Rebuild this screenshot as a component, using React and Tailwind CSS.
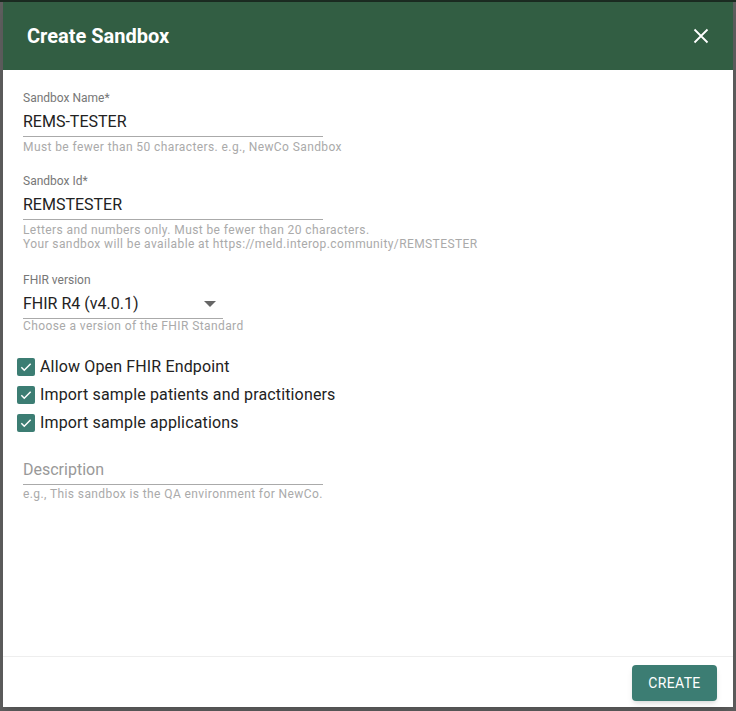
import React from 'react';

const font = { fontFamily: 'Roboto, "Liberation Sans", sans-serif' };

const Check = ({ label }) => (
  <label className="flex items-center h-7">
    <span className="ml-[14px] w-[18px] h-[18px] rounded-[2px] bg-[#3c7d73] flex items-center justify-center">
      <svg width="14" height="14" viewBox="0 0 24 24" fill="none">
        <path d="M4 12.5l5 5L20 6.5" stroke="white" strokeWidth="2.6" />
      </svg>
    </span>
    <span className="ml-[5px] text-[16px] text-[#222] tracking-[0.15px]">{label}</span>
  </label>
);

const Helper = ({ children, className = '' }) => (
  <div className={`text-[12px] text-[#aaa] leading-[14px] tracking-[0.4px] ${className}`}>{children}</div>
);

const Field = ({ label, value, helper }) => (
  <div className="px-[20px]">
    <div className="text-[12px] text-[#777] leading-[14px]">{label}</div>
    <div className="w-[300px] border-b border-[#aaa] h-[32px] flex items-end pb-[5px] text-[16px] text-[#222] leading-[19px]">
      {value}
    </div>
    <div className="mt-[3px]">
      {helper.map((h) => (
        <Helper key={h}>{h}</Helper>
      ))}
    </div>
  </div>
);

export default function App() {
  return (
    <div className="w-[736px] h-[711px] bg-[#5e5e5e] relative overflow-hidden" style={font}>
      <div className="h-[2px] bg-[#1b2b21]" />
      <div className="mx-[3px] h-[705px] bg-white flex flex-col shadow-lg">
        <div className="h-[68px] bg-[#325e43] flex items-center justify-between pl-[24px] pr-[24px]">
          <h1 className="text-white text-[20px] font-bold">Create Sandbox</h1>
          <svg width="16" height="16" viewBox="0 0 16 16">
            <path d="M1.5 1.5l13 13M14.5 1.5l-13 13" stroke="white" strokeWidth="1.8" />
          </svg>
        </div>
        <div className="flex-1 pt-[21px]">
          <Field label="Sandbox Name*" value="REMS-TESTER" helper={['Must be fewer than 50 characters. e.g., NewCo Sandbox']} />
          <div className="h-[20px]" />
          <Field
            label="Sandbox Id*"
            value="REMSTESTER"
            helper={[
              'Letters and numbers only. Must be fewer than 20 characters.',
              'Your sandbox will be available at https://meld.interop.community/REMSTESTER',
            ]}
          />
          <div className="h-[22px]" />
          <div className="px-[20px]">
            <div className="text-[12px] text-[#777] leading-[14px]">FHIR version</div>
            <div className="w-[200px] border-b border-[#aaa] h-[32px] flex items-end justify-between pb-[5px] text-[16px] text-[#222] leading-[19px]">
              <span>FHIR R4 (v4.0.1)</span>
              <svg width="12" height="6" viewBox="0 0 12 6" className="mr-[7px] mb-[6px]">
                <path d="M0 0h12L6 6z" fill="#666" />
              </svg>
            </div>
            <Helper>Choose a version of the FHIR Standard</Helper>
          </div>
          <div className="mt-[20px]">
            <Check label="Allow Open FHIR Endpoint" />
            <Check label="Import sample patients and practitioners" />
            <Check label="Import sample applications" />
          </div>
          <div className="px-[20px] mt-[21px]">
            <div className="w-[300px] border-b border-[#aaa] h-[27px] flex items-end pb-[5px] text-[16px] text-[#999] leading-[19px]">
              Description
            </div>
            <Helper className="mt-[2px]">e.g., This sandbox is the QA environment for NewCo.</Helper>
          </div>
        </div>
        <div className="h-[51px] border-t border-[#eee] flex items-start justify-end pr-[16px] pt-[8px]">
          <button className="w-[85px] h-[36px] rounded bg-[#3c7d73] text-white text-[14px] tracking-wide shadow-md">
            CREATE
          </button>
        </div>
      </div>
    </div>
  );
}
